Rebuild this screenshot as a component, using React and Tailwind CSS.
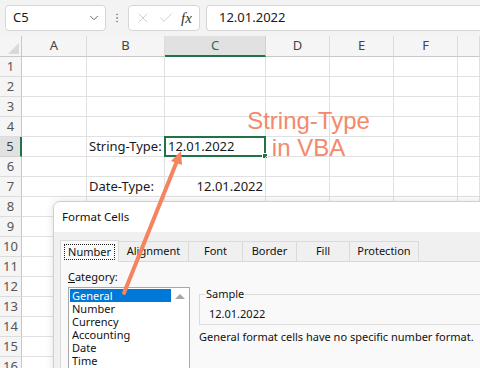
import { ChevronDown, X, Check, EllipsisVertical } from "lucide-react";

const columns = ["A", "B", "C", "D", "E", "F", ""];

const cells = {
  5: { B: { text: "String-Type:" }, C: { text: "12.01.2022", selected: true } },
  7: { B: { text: "Date-Type:" }, C: { text: "12.01.2022", right: true } },
};

const tabs = [
  { label: "Alignment", w: "w-[70px]" },
  { label: "Font", w: "w-[54px]" },
  { label: "Border", w: "w-[54px]" },
  { label: "Fill", w: "w-[53px]" },
  { label: "Protection", w: "w-[69px]" },
];

const categories = ["General", "Number", "Currency", "Accounting", "Date", "Time"];

export default function App() {
  const rows = Array.from({ length: 16 }, (_, i) => i + 1);

  return (
    <div className="relative w-[480px] h-[368px] overflow-hidden bg-white font-['Noto_Sans',sans-serif] text-[#1a1a1a]">
      {/* Formula bar */}
      <div className="h-[36px] bg-[#f3f3f3] flex items-center pl-[5px]">
        <div className="w-[101px] h-[26px] bg-white border border-[#d6d6d6] rounded-[4px] flex items-center justify-between pl-[7px] pr-[4px] text-[13px]">
          <span>C5</span>
          <ChevronDown className="w-[14px] h-[14px] text-[#555]" strokeWidth={1.5} />
        </div>
        <div className="w-[22px] flex justify-center">
          <EllipsisVertical className="w-[12px] h-[12px] text-[#888]" strokeWidth={2} />
        </div>
        <div className="w-[72px] h-[26px] bg-white border border-[#d6d6d6] rounded-[4px] flex items-center pl-[6px] gap-[7px]">
          <X className="w-[16px] h-[16px] text-[#c4c4c4]" strokeWidth={1.2} />
          <Check className="w-[16px] h-[16px] text-[#c4c4c4]" strokeWidth={1.2} />
          <span className="font-['Liberation_Serif',serif] italic text-[15px] text-[#333] leading-none">fx</span>
        </div>
        <div className="ml-[6px] flex-1 h-[26px] bg-white border border-r-0 border-[#d6d6d6] rounded-l-[4px] pl-[12px] flex items-center text-[13px]">
          12.01.2022
        </div>
      </div>

      {/* Sheet grid */}
      <div className="grid grid-cols-[22px_65px_78px_101px_64px_64px_64px_1fr] text-[13px]">
        <div className="h-[21px] bg-[#f5f5f5] border-r border-b border-[#c8c8c8] relative">
          <div className="absolute right-[2px] bottom-[2px] w-0 h-0 border-l-[11px] border-l-transparent border-b-[11px] border-b-[#d9d9d9]" />
        </div>
        {columns.map((c, i) =>
          c === "C" ? (
            <div key={i} className="h-[21px] bg-[#e1e1e1] border-r border-[#d0d0d0] border-b-2 border-b-[#217346] flex items-center justify-center text-[#217346]">
              {c}
            </div>
          ) : (
            <div key={i} className="h-[21px] bg-[#f5f5f5] border-r border-b border-r-[#dcdcdc] border-b-[#c8c8c8] flex items-center justify-center text-[#444]">
              {c}
            </div>
          )
        )}

        {rows.map((r) => (
          <div key={r} className="contents">
            <div
              className={
                r === 5
                  ? "h-[20px] bg-[#e1e1e1] border-b border-b-[#d0d0d0] border-r-2 border-r-[#217346] flex items-center justify-center text-[#444]"
                  : "h-[20px] bg-[#f5f5f5] border-b border-r border-b-[#dcdcdc] border-r-[#c8c8c8] flex items-center justify-center text-[#555]"
              }
            >
              {r}
            </div>
            {columns.map((c, i) => {
              const cell = cells[r] && cells[r][c];
              return (
                <div
                  key={i}
                  className={`h-[20px] border-r border-b border-[#e1e1e1] flex items-center relative whitespace-nowrap ${
                    cell && cell.right ? "justify-end pr-[2px]" : "pl-[2px]"
                  }`}
                >
                  {cell && cell.selected && (
                    <div className="absolute -left-px -top-px right-[-1px] bottom-[-1px] border-2 border-[#217346]">
                      <div className="absolute -right-[4px] -bottom-[4px] w-[6px] h-[6px] bg-[#217346] border border-white" />
                    </div>
                  )}
                  {cell && <span className={cell.selected ? "pl-[1px]" : ""}>{cell.text}</span>}
                </div>
              );
            })}
          </div>
        ))}
      </div>

      {/* Annotation */}
      <div className="absolute left-[240px] top-[107px] w-[137px] text-center font-['Liberation_Sans',Arial,sans-serif] text-[24px] leading-[27px] text-[#f4896b]">
        String-Type
        <br />
        in VBA
      </div>

      {/* Format Cells dialog */}
      <div className="absolute left-[53px] top-[201px] w-[440px] h-[180px] bg-[#f0f0f0] border border-[#cfcfcf] rounded-tl-[7px] shadow-[0_0_8px_rgba(0,0,0,0.12)] overflow-hidden text-[11px] text-[#111]">
        <div className="h-[30px] bg-white flex items-center pl-[8px] text-[11.5px]">Format Cells</div>
        <div className="pl-[6px] pt-[7px]">
          <div className="flex items-end h-[22px]">
            <div className="w-[59px] h-[22px] bg-[#f9f9f9] border border-b-0 border-[#d9d9d9] relative z-10 -mb-px flex items-center justify-center">
              <span className="border border-dotted border-[#222] px-[3px] leading-[14px]">Number</span>
            </div>
            {tabs.map((t) => (
              <div key={t.label} className={`${t.w} h-[20px] bg-[#f0f0f0] border-t border-r border-[#dadada] flex items-center justify-center`}>
                {t.label}
              </div>
            ))}
          </div>
          <div className="h-[120px] bg-[#f9f9f9] border-t border-l border-[#d9d9d9] flex pl-[7px] pt-[8px]">
            <div className="w-[122px]">
              <div className="leading-[14px] mb-[3px]">
                <span className="underline">C</span>ategory:
              </div>
              <div className="h-[100px] bg-white border border-[#a8a8a8] flex">
                <div className="flex-1 pl-px pt-px">
                  {categories.map((c, i) => (
                    <div key={c} className={`h-[13px] leading-[13px] pl-[2px] ${i === 0 ? "bg-[#0078d7] text-white" : ""}`}>
                      {c}
                    </div>
                  ))}
                </div>
                <div className="w-[18px] flex justify-center pt-[6px]">
                  <div className="w-0 h-0 border-l-[5px] border-r-[5px] border-b-[5px] border-l-transparent border-r-transparent border-b-[#a6a6a6]" />
                </div>
              </div>
            </div>
            <div className="ml-[9px] flex-1">
              <div className="mt-[24px] h-[31px] border border-r-0 border-[#dcdcdc] relative pl-[9px] pt-[12px] leading-[14px]">
                <span className="absolute -top-[8px] left-[5px] px-px bg-[#f9f9f9]">Sample</span>
                12.01.2022
              </div>
              <div className="mt-[5px] leading-[14px] whitespace-nowrap">General format cells have no specific number format.</div>
            </div>
          </div>
        </div>
      </div>

      {/* Arrow */}
      <svg className="absolute inset-0 pointer-events-none" width="480" height="368" viewBox="0 0 480 368">
        <line x1="124" y1="293" x2="177" y2="161" stroke="#f4845f" strokeWidth="4" strokeLinecap="round" />
        <polygon points="181,151 182,165 171,161" fill="#f4845f" />
      </svg>
    </div>
  );
}
